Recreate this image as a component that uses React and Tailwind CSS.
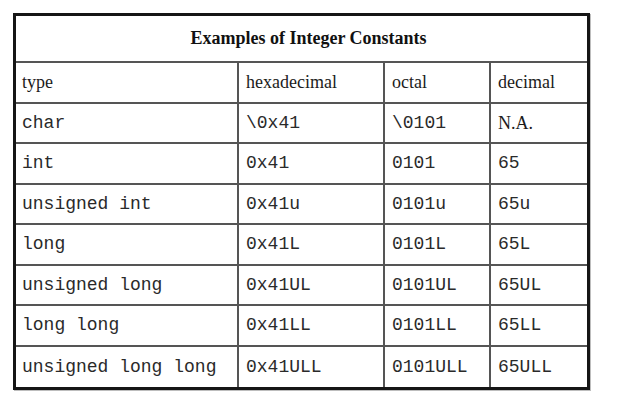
const rows = [
  ['char', '\\0x41', '\\0101', 'N.A.'],
  ['int', '0x41', '0101', '65'],
  ['unsigned int', '0x41u', '0101u', '65u'],
  ['long', '0x41L', '0101L', '65L'],
  ['unsigned long', '0x41UL', '0101UL', '65UL'],
  ['long long', '0x41LL', '0101LL', '65LL'],
  ['unsigned long long', '0x41ULL', '0101ULL', '65ULL'],
];

const serif = "font-['Liberation_Serif','Times_New_Roman',serif]";
const mono = "font-['Liberation_Mono','Courier_New',monospace]";

function Row({ cells, last, header }) {
  return (
    <div className={`grid grid-cols-[223px_146px_106px_96px] h-[40.5px] ${last ? 'h-[38.5px]' : 'border-b-2 border-[#555]'}`}>
      {cells.map((cell, i) => (
        <div
          key={i}
          className={`flex items-center text-[18px] leading-none whitespace-pre ${header || cell === 'N.A.' ? `${serif} text-[#1c1c1c]` : `${mono} text-[#2a2a2a]`} ${i < 3 ? 'border-r-2 border-[#555]' : ''} ${i === 0 ? 'pl-[6px]' : 'pl-[7px]'}`}
        >
          {cell}
        </div>
      ))}
    </div>
  );
}

export default function App() {
  return (
    <div className="min-h-[400px] bg-white p-[13px]">
      <div className="w-[577px] border-[3px] border-[#161616] shadow-[1px_1px_0_#bdbdbd]">
        <div className={`flex h-[47px] items-center justify-center border-b-2 border-[#555] pl-[14px] text-[18px] font-bold text-[#111] ${serif}`}>
          Examples of Integer Constants
        </div>
        <Row cells={['type', 'hexadecimal', 'octal', 'decimal']} header />
        {rows.map((r, i) => (
          <Row key={r[0]} cells={r} last={i === rows.length - 1} />
        ))}
      </div>
    </div>
  );
}
